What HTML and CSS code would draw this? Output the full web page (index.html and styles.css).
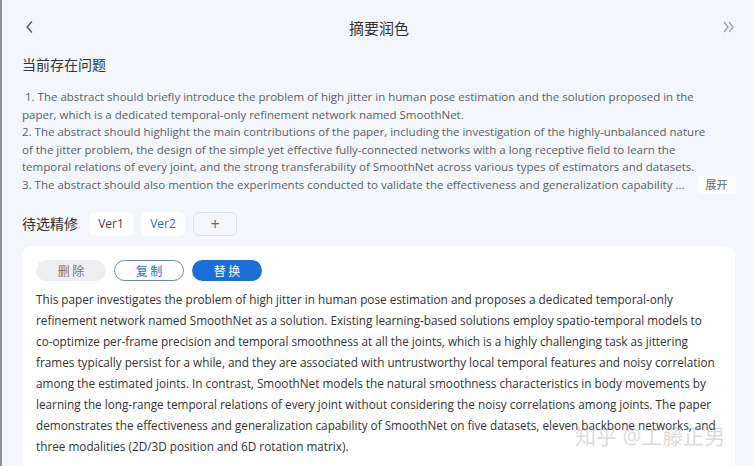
FILE: index.html
```html
<!DOCTYPE html>
<html lang="zh">
<head>
<meta charset="utf-8">
<link rel="stylesheet" href="styles.css">
</head>
<body>
<div class="app">
  <header class="topbar">
    <span class="back"><svg width="12" height="14" viewBox="0 0 12 14"><path d="M8 1.5 L3 7 L8 12.5" fill="none" stroke="#555" stroke-width="1.3"/></svg></span>
    <h1 class="title">摘要润色</h1>
    <span class="collapse"><svg width="14" height="14" viewBox="0 0 14 14"><path d="M2 2 L6 7 L2 12 M7 2 L11 7 L7 12" fill="none" stroke="#9aa0a8" stroke-width="1.3"/></svg></span>
  </header>

  <h2 class="section-title">当前存在问题</h2>
  <div class="issues">
    <p>&nbsp;1. The abstract should briefly introduce the problem of high jitter in human pose estimation and the solution proposed in the<br>paper, which is a dedicated temporal-only refinement network named SmoothNet.</p>
    <p>2. The abstract should highlight the main contributions of the paper, including the investigation of the highly-unbalanced nature<br>of the jitter problem, the design of the simple yet effective fully-connected networks with a long receptive field to learn the<br>temporal relations of every joint, and the strong transferability of SmoothNet across various types of estimators and datasets.</p>
    <div class="last-line"><span>3. The abstract should also mention the experiments conducted to validate the effectiveness and generalization capability ...</span><span class="expand">展开</span></div>
  </div>

  <div class="versions">
    <span class="section-title inline">待选精修</span>
    <span class="chip">Ver1</span>
    <span class="chip active">Ver2</span>
    <span class="chip add">+</span>
  </div>

  <div class="card">
    <div class="actions">
      <button class="btn del">删 除</button>
      <button class="btn copy">复 制</button>
      <button class="btn replace">替 换</button>
    </div>
    <p class="result">This paper investigates the problem of high jitter in human pose estimation and proposes a dedicated temporal-only refinement network named SmoothNet as a solution. Existing learning-based solutions employ spatio-temporal models to co-optimize per-frame precision and temporal smoothness at all the joints, which is a highly challenging task as jittering frames typically persist for a while, and they are associated with untrustworthy local temporal features and noisy correlation among the estimated joints. In contrast, SmoothNet models the natural smoothness characteristics in body movements by learning the long-range temporal relations of every joint without considering the noisy correlations among joints. The paper demonstrates the effectiveness and generalization capability of SmoothNet on five datasets, eleven backbone networks, and three modalities (2D/3D position and 6D rotation matrix).</p>
    <span class="watermark">知乎 @工藤正男</span>
  </div>
</div>
</body>
</html>
```

FILE: styles.css
```css
* { box-sizing: border-box; }
html, body { margin: 0; height: 100%; }
body {
  background: #f3f6fb;
  font-family: "Open Sans", "Noto Sans CJK SC", sans-serif;
  color: #333;
  overflow: hidden;
}
.app {
  height: 466px;
  border-left: 2px solid #8d929a;
  padding: 0 18px 0 20px;
}
.topbar {
  height: 56px;
  display: flex;
  align-items: center;
  justify-content: space-between;
  position: relative;
  padding-bottom: 2px;
}
.back { display: flex; padding-left: 2px; }
.collapse { display: flex; }
.title {
  position: absolute;
  left: 0; right: 0;
  text-align: center;
  margin: 0;
  font-size: 15px;
  font-weight: normal;
  color: #333;
  pointer-events: none;
}
.section-title {
  margin: 0;
  font-size: 14px;
  font-weight: normal;
  color: #333;
  line-height: 18px;
}
.issues {
  margin-top: 14px;
  font-size: 11.5px;
  line-height: 17.6px;
  color: #5a5f66;
}
.issues p { margin: 0; white-space: nowrap; }
.last-line { display: flex; align-items: center; gap: 13px; white-space: nowrap; }
.expand {
  background: #fbfcfe;
  padding: 0 8px;
  font-size: 11px;
  color: #666;
  line-height: 18px;
}
.versions {
  display: flex;
  align-items: center;
  gap: 8px;
  margin-top: 18px;
}
.versions .inline { margin-right: 3px; }
.chip {
  width: 44px;
  height: 24px;
  border-radius: 6px;
  background: #fff;
  display: flex;
  align-items: center;
  justify-content: center;
  font-size: 12px;
  color: #444;
}
.chip.active { color: #1e6bd0; }
.chip.add {
  background: transparent;
  border: 1px solid #dde2ea;
  font-size: 16px;
  color: #666;
}
.card {
  margin-top: 10px;
  background: #fff;
  border-radius: 10px;
  padding: 14px 14px 20px 14px;
  position: relative;
  width: 713px;
}
.actions { display: flex; gap: 8px; }
.btn {
  width: 70px;
  height: 21px;
  border-radius: 11px;
  font-family: "Noto Sans CJK SC", sans-serif;
  font-size: 12px;
  border: 1px solid transparent;
  padding: 0;
  line-height: 19px;
}
.btn.del { background: #eceef2; color: #777; }
.btn.copy { background: #fff; border-color: #6f86a8; color: #1e6bd0; }
.btn.replace { background: #1a6fd8; color: #fff; }
.result {
  margin: 8px 0 0;
  font-size: 11.75px;
  line-height: 21px;
  color: #333;
}
.watermark {
  position: absolute;
  left: 553px;
  top: 176px;
  font-size: 21px;
  line-height: 28px;
  white-space: nowrap;
  color: rgba(150,150,150,0.35);
  pointer-events: none;
}
```
